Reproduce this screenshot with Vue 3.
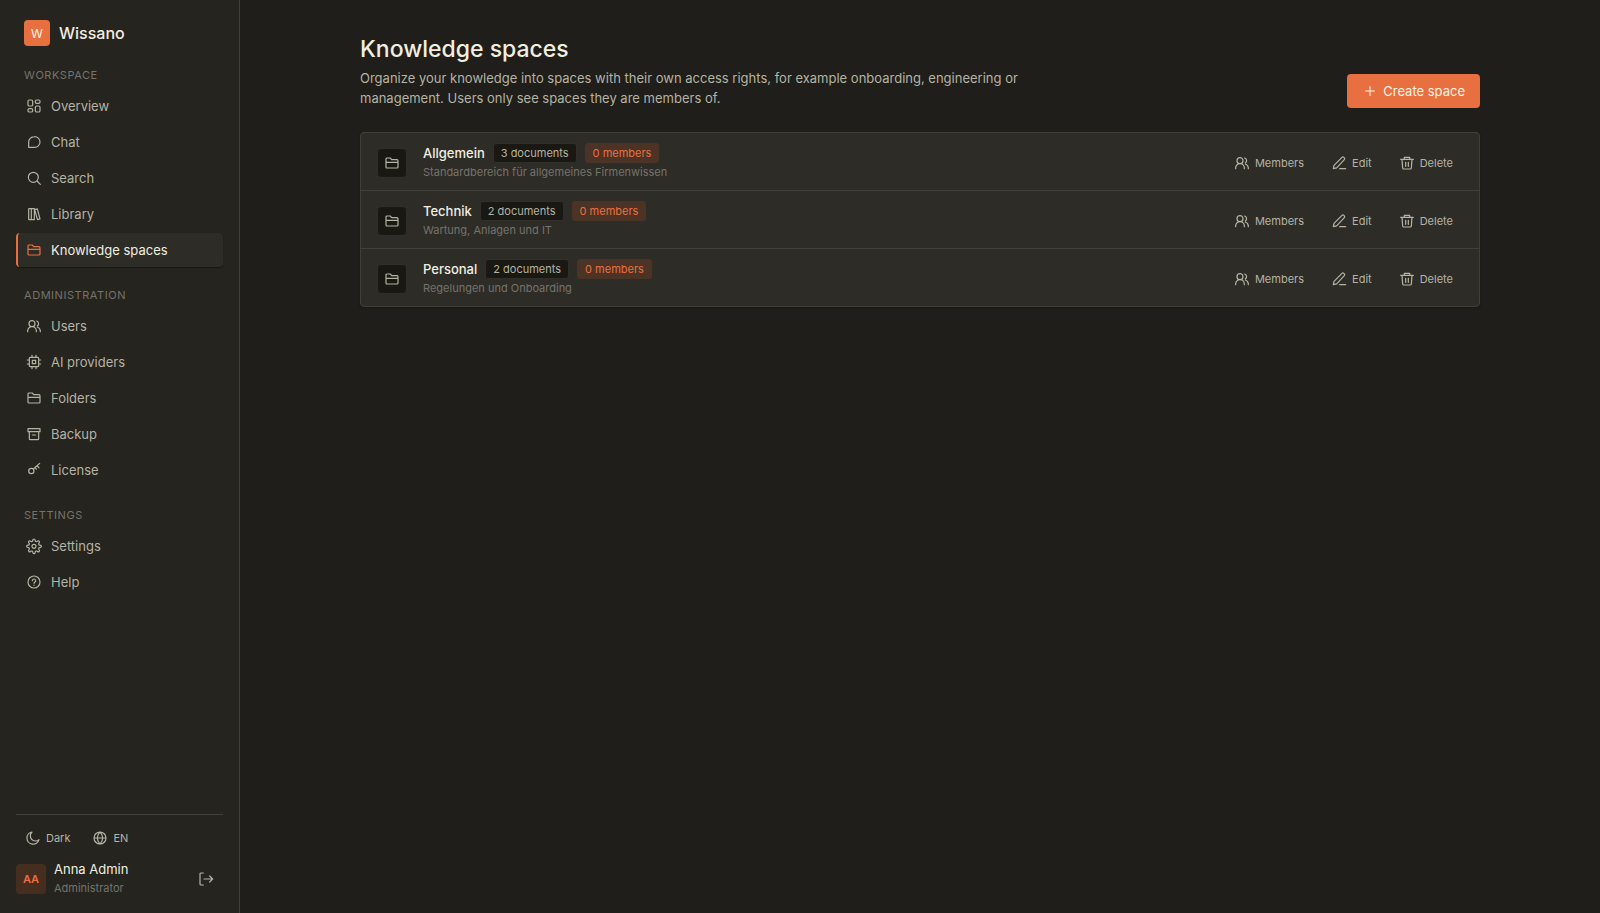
<script setup>
const icons = {
  grid: 'M5 3h3a2 2 0 0 1 2 2v5a2 2 0 0 1-2 2H5a2 2 0 0 1-2-2V5a2 2 0 0 1 2-2zM16 3h3a2 2 0 0 1 2 2v1a2 2 0 0 1-2 2h-3a2 2 0 0 1-2-2V5a2 2 0 0 1 2-2zM16 12h3a2 2 0 0 1 2 2v5a2 2 0 0 1-2 2h-3a2 2 0 0 1-2-2v-5a2 2 0 0 1 2-2zM5 16h3a2 2 0 0 1 2 2v1a2 2 0 0 1-2 2H5a2 2 0 0 1-2-2v-1a2 2 0 0 1 2-2z',
  chat: 'M4 20v-7.5A8.5 8 0 0 1 12.5 4 8 8 0 0 1 21 12a8 8 0 0 1-8.5 8z',
  search: 'M11 3.5a7.5 7.5 0 1 1 0 15 7.5 7.5 0 0 1 0-15zM16.5 16.5l5 5',
  library: 'M4.5 4H8v16.500H4.500a.5.5 0 0 1-.5-.5V4.500a.5.5 0 0 1 .5-.5zM8 4h4.500v16.500H8M13 5.500l4-1.200 4 15-3.800 1.200z',
  folder: 'M3 18V6a1.500 1.500 0 0 1 1.500-1.500h4.800L11.500 7h8A1.500 1.500 0 0 1 21 8.500V18a1.500 1.500 0 0 1-1.500 1.500h-15A1.500 1.500 0 0 1 3 18zM3 11h18',
  users: 'M9 4a4.500 4.500 0 1 1 0 9 4.500 4.500 0 0 1 0-9zM2.500 20.500v-1A6.500 6.500 0 0 1 9 13a6.500 6.500 0 0 1 6.500 6.500v1M16 4.500a4.200 4.200 0 0 1 1 7.500M17 13.500a6.800 6.800 0 0 1 4.500 6v1',
  chip: 'M6.500 5h11A1.500 1.500 0 0 1 19 6.500v11a1.500 1.500 0 0 1-1.500 1.500h-11A1.500 1.500 0 0 1 5 17.500v-11A1.500 1.500 0 0 1 6.500 5zM9.500 9.500h5v5h-5zM9 2v3M15 2v3M9 19v3M15 19v3M2 9h3M2 15h3M19 9h3M19 15h3',
  archive: 'M3 4h18v4.500H3zM5 8.500V19a1.500 1.500 0 0 0 1.500 1.500h11A1.500 1.500 0 0 0 19 19V8.500M9.500 13.500h5',
  key: 'M8 9.500a4 4 0 1 1 0 8 4 4 0 0 1 0-8zM11 10.500l9.500-8.500M16.500 5.500l3 3.300M13.500 8.300l2.200 2.400',
  gear: 'M10.300 3.200a1.700 1.700 0 0 1 3.400 0l.2 1a1.800 1.800 0 0 0 2.500 1.100l1-.6a1.700 1.700 0 0 1 2.400 2.400l-.6 1a1.800 1.800 0 0 0 1.100 2.500l1 .2a1.700 1.700 0 0 1 0 3.400l-1 .2a1.800 1.800 0 0 0-1.100 2.500l.6 1a1.700 1.700 0 0 1-2.400 2.400l-1-.6a1.800 1.800 0 0 0-2.500 1.100l-.2 1a1.700 1.700 0 0 1-3.400 0l-.2-1a1.800 1.800 0 0 0-2.500-1.100l-1 .6a1.700 1.700 0 0 1-2.400-2.400l.6-1a1.800 1.800 0 0 0-1.100-2.500l-1-.2a1.700 1.700 0 0 1 0-3.400l1-.2a1.800 1.800 0 0 0 1.100-2.500l-.6-1a1.700 1.700 0 0 1 2.400-2.400l1 .6a1.800 1.800 0 0 0 2.500-1.100zM12 9.500a3 3 0 1 1 0 6 3 3 0 0 1 0-6z',
  help: 'M12 3a9 9 0 1 1 0 18 9 9 0 0 1 0-18zM9.500 10a2.500 2.500 0 1 1 3.700 2.200c-.8.400-1.200.9-1.200 1.800M12 16.500v.500',
  moon: 'M21 14.500A9.200 9.200 0 1 1 10.500 3a7.500 7.500 0 0 0 10.500 11.500z',
  globe: 'M12 3a9 9 0 1 1 0 18 9 9 0 0 1 0-18zM3 12h18M12 3c-5.300 5-5.300 13 0 18M12 3c5.300 5 5.300 13 0 18',
  logout: 'M8 3H4.500A1.500 1.500 0 0 0 3 4.500v15A1.500 1.500 0 0 0 4.500 21H8M9 12h13M17.500 7.500L22 12l-4.500 4.500',
  plus: 'M12 4.500v15M4.500 12h15',
  pen: 'M3.500 20.500l1-5L16.500 3.500a2 2 0 0 1 2.800 0l.7.7a2 2 0 0 1 0 2.800L8.500 19.200zM13 20.500h9',
  trash: 'M2.500 6.500h19M8 6V3.500h8V6M4.500 6.500l1 13A1.700 1.700 0 0 0 7.200 21h9.600a1.700 1.700 0 0 0 1.700-1.500l1-13M10 11v6M14 11v6',
}

const groups = [
  {
    title: 'Workspace',
    items: [
      { label: 'Overview', icon: 'grid' },
      { label: 'Chat', icon: 'chat' },
      { label: 'Search', icon: 'search' },
      { label: 'Library', icon: 'library' },
      { label: 'Knowledge spaces', icon: 'folder', active: true },
    ],
  },
  {
    title: 'Administration',
    items: [
      { label: 'Users', icon: 'users' },
      { label: 'AI providers', icon: 'chip' },
      { label: 'Folders', icon: 'folder' },
      { label: 'Backup', icon: 'archive' },
      { label: 'License', icon: 'key' },
    ],
  },
  {
    title: 'Settings',
    items: [
      { label: 'Settings', icon: 'gear' },
      { label: 'Help', icon: 'help' },
    ],
  },
]

const spaces = [
  { name: 'Allgemein', documents: 3, members: 0, description: 'Standardbereich für allgemeines Firmenwissen' },
  { name: 'Technik', documents: 2, members: 0, description: 'Wartung, Anlagen und IT' },
  { name: 'Personal', documents: 2, members: 0, description: 'Regelungen und Onboarding' },
]

const actions = [
  { label: 'Members', icon: 'users' },
  { label: 'Edit', icon: 'pen' },
  { label: 'Delete', icon: 'trash' },
]
</script>

<template>
  <div class="app">
    <aside class="sidebar">
      <div class="brand">
        <span class="logo">W</span>
        <span class="brand-name">Wissano</span>
      </div>
      <nav>
        <section v-for="group in groups" :key="group.title" class="group">
          <h2 class="group-title">{{ group.title }}</h2>
          <a v-for="item in group.items" :key="item.label" href="#" class="nav-item" :class="{ active: item.active }">
            <svg class="icon" viewBox="0 0 24 24"><path :d="icons[item.icon]" /></svg>
            <span>{{ item.label }}</span>
          </a>
        </section>
      </nav>
      <footer class="foot">
        <div class="prefs">
          <button type="button" class="ghost">
            <svg class="icon small" viewBox="0 0 24 24"><path :d="icons.moon" /></svg>Dark
          </button>
          <button type="button" class="ghost">
            <svg class="icon small" viewBox="0 0 24 24"><path :d="icons.globe" /></svg>EN
          </button>
        </div>
        <div class="account">
          <span class="avatar">AA</span>
          <div class="who">
            <div class="who-name">Anna Admin</div>
            <div class="who-role">Administrator</div>
          </div>
          <button type="button" class="logout" aria-label="Sign out">
            <svg class="icon small" viewBox="0 0 24 24"><path :d="icons.logout" /></svg>
          </button>
        </div>
      </footer>
    </aside>

    <main class="main">
      <div class="content">
        <header class="head">
          <div class="intro">
            <h1>Knowledge spaces</h1>
            <p>Organize your knowledge into spaces with their own access rights, for example onboarding, engineering or management. Users only see spaces they are members of.</p>
          </div>
          <button type="button" class="create">
            <svg class="icon small" viewBox="0 0 24 24"><path :d="icons.plus" /></svg>Create space
          </button>
        </header>
        <ul class="card">
          <li v-for="space in spaces" :key="space.name" class="row">
            <span class="tile"><svg class="icon small" viewBox="0 0 24 24"><path :d="icons.folder" /></svg></span>
            <div class="info">
              <div class="line">
                <span class="name">{{ space.name }}</span>
                <span class="chip">{{ space.documents }} documents</span>
                <span class="chip accent">{{ space.members }} members</span>
              </div>
              <div class="desc">{{ space.description }}</div>
            </div>
            <div class="actions">
              <button v-for="action in actions" :key="action.label" type="button" class="ghost">
                <svg class="icon small" viewBox="0 0 24 24"><path :d="icons[action.icon]" /></svg>{{ action.label }}
              </button>
            </div>
          </li>
        </ul>
      </div>
    </main>
  </div>
</template>

<style>
body {
  background: #1f1e1a;
}
</style>

<style scoped>
* {
  box-sizing: border-box;
}
.app {
  display: flex;
  min-height: 100vh;
  background: #1f1e1a;
  color: #b5b3a4;
  font-family: Inter, "Liberation Sans", sans-serif;
  font-size: 13px;
}
h1, h2, p, ul {
  margin: 0;
  padding: 0;
}
button {
  margin: 0;
  border: 0;
  background: none;
  color: inherit;
  font: inherit;
  cursor: pointer;
}
.icon {
  width: 18px;
  height: 18px;
  flex: none;
  fill: none;
  stroke: currentColor;
  stroke-width: 1.8;
  stroke-linecap: round;
  stroke-linejoin: round;
}
.icon.small {
  width: 16px;
  height: 16px;
}
.sidebar {
  position: sticky;
  top: 0;
  display: flex;
  flex-direction: column;
  flex: none;
  width: 240px;
  height: 100vh;
  padding: 20px 16px 18px;
  background: #25241f;
  border-right: 1px solid #403f38;
}
.brand {
  display: flex;
  align-items: center;
  gap: 9px;
  height: 26px;
  margin-bottom: 20px;
  padding-left: 8px;
}
.logo {
  display: grid;
  place-items: center;
  width: 26px;
  height: 26px;
  border-radius: 4px;
  background: #e87040;
  color: #fbf3e4;
  font-size: 12px;
}
.brand-name {
  color: #f1eee0;
  font-size: 16px;
  font-weight: 500;
}
.group {
  display: flex;
  flex-direction: column;
  gap: 2px;
  margin-bottom: 19px;
}
.group-title {
  margin-bottom: 3px;
  padding-left: 8px;
  color: #75736a;
  font-size: 11px;
  font-weight: 400;
  line-height: 18px;
  letter-spacing: 0.05em;
  text-transform: uppercase;
}
.nav-item {
  display: flex;
  align-items: center;
  gap: 8px;
  height: 34px;
  padding: 0 7px;
  border-left: 2px solid transparent;
  border-radius: 4px;
  color: #b5b3a4;
  text-decoration: none;
}
.nav-item .icon {
  padding: 1px;
  overflow: visible;
}
.nav-item.active {
  border-left-color: #e87040;
  background: #2d2c27;
  box-shadow: 0 1px 1px #191813;
  color: #f1eee0;
}
.nav-item.active .icon {
  color: #e87040;
}
.foot {
  margin-top: auto;
  padding-top: 8px;
  border-top: 1px solid #403f38;
}
.prefs {
  display: flex;
  gap: 4px;
}
.ghost {
  display: flex;
  align-items: center;
  gap: 5px;
  height: 30px;
  padding: 0 9px;
  font-size: 11px;
}
.account {
  display: flex;
  align-items: center;
  gap: 8px;
  margin-top: 10px;
}
.avatar {
  display: grid;
  place-items: center;
  width: 30px;
  height: 30px;
  border-radius: 4px;
  background: #452d20;
  color: #e87040;
  font-size: 11px;
  font-weight: 600;
}
.who {
  flex: 1;
  margin: -4px 0;
}
.who-name {
  color: #f1eee0;
  line-height: 19px;
}
.who-role {
  color: #75736a;
  font-size: 11px;
  line-height: 19px;
}
.logout {
  display: grid;
  padding: 8px 9px;
}
.main {
  flex: 1;
  min-width: 0;
  padding: 34px 32px;
}
.content {
  max-width: 1120px;
  margin: 0 auto;
}
.head {
  display: flex;
  align-items: flex-end;
  justify-content: space-between;
  gap: 24px;
  margin-bottom: 24px;
}
.intro {
  max-width: 680px;
}
h1 {
  margin-bottom: 4px;
  color: #f1eee0;
  font-size: 23px;
  font-weight: 500;
  line-height: 30px;
}
.intro p {
  line-height: 20px;
}
.create {
  display: flex;
  align-items: center;
  flex: none;
  gap: 5px;
  height: 34px;
  padding: 0 15px;
  border-radius: 4px;
  background: #e87040;
  color: #fbf3e4;
}
.create .icon {
  padding: 1px;
}
.card {
  list-style: none;
  border: 1px solid #403f38;
  border-radius: 4px;
  background: #2d2c27;
  box-shadow: 0 1px 2px #191813;
}
.row {
  display: flex;
  align-items: center;
  gap: 16px;
  padding: 10px 16px 8px;
}
.row + .row {
  border-top: 1px solid #403f38;
}
.tile {
  display: grid;
  place-items: center;
  width: 30px;
  height: 30px;
  border: 1px solid #302f29;
  border-radius: 4px;
  background: #191813;
}
.info {
  flex: 1;
  min-width: 0;
}
.line {
  display: flex;
  align-items: center;
  gap: 8px;
  height: 20px;
}
.name {
  color: #f1eee0;
  font-weight: 500;
}
.chip {
  height: 20px;
  padding: 0 7px;
  border: 1px solid #302f29;
  border-radius: 3px;
  background: #191813;
  font-size: 11px;
  line-height: 18px;
}
.chip.accent {
  border-color: #4b3326;
  background: #4b3326;
  color: #e87040;
}
.desc {
  color: #75736a;
  font-size: 11px;
  line-height: 19px;
}
.actions {
  display: flex;
  gap: 7px;
}
.actions .ghost {
  padding: 0 10px;
}
</style>
